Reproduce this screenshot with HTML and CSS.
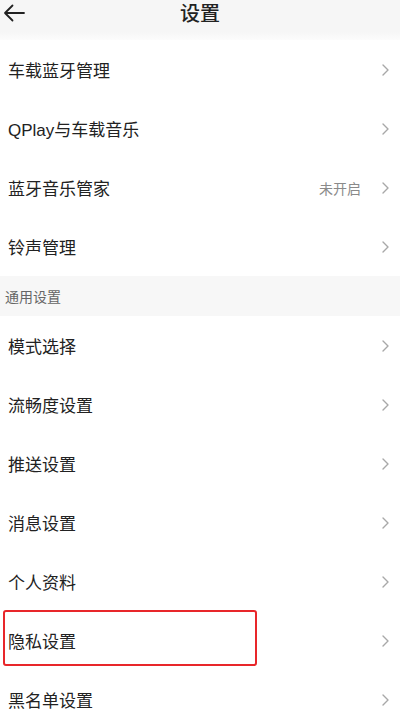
FILE: index.html
```html
<!DOCTYPE html>
<html>
<head>
    <meta charset="UTF-8">
    <meta name="viewport" content="width=device-width, initial-scale=1.0">
    <title>设置</title>
    <link rel="stylesheet" href="styles.css">
</head>
<body>
    <div class="page">
        <div class="top-bar">
            <span class="back-btn">
                <svg width="22" height="18" viewBox="0 0 22 18">
                    <path d="M21 9H2M9.5 1.5L2 9l7.5 7.5" fill="none" stroke="#222" stroke-width="1.8" stroke-linecap="round" stroke-linejoin="round"/>
                </svg>
            </span>
            <h1 class="page-title">设置</h1>
        </div>

        <ul class="setting-list">
            <li class="setting-item"><span class="item-name">车载蓝牙管理</span><svg class="arrow" viewBox="0 0 7 12"><path d="M1 1l5 5-5 5"/></svg></li>
            <li class="setting-item"><span class="item-name">QPlay与车载音乐</span><svg class="arrow" viewBox="0 0 7 12"><path d="M1 1l5 5-5 5"/></svg></li>
            <li class="setting-item"><span class="item-name">蓝牙音乐管家</span><span class="item-value">未开启</span><svg class="arrow" viewBox="0 0 7 12"><path d="M1 1l5 5-5 5"/></svg></li>
            <li class="setting-item"><span class="item-name">铃声管理</span><svg class="arrow" viewBox="0 0 7 12"><path d="M1 1l5 5-5 5"/></svg></li>
        </ul>

        <div class="section-title">通用设置</div>

        <ul class="setting-list">
            <li class="setting-item"><span class="item-name">模式选择</span><svg class="arrow" viewBox="0 0 7 12"><path d="M1 1l5 5-5 5"/></svg></li>
            <li class="setting-item"><span class="item-name">流畅度设置</span><svg class="arrow" viewBox="0 0 7 12"><path d="M1 1l5 5-5 5"/></svg></li>
            <li class="setting-item"><span class="item-name">推送设置</span><svg class="arrow" viewBox="0 0 7 12"><path d="M1 1l5 5-5 5"/></svg></li>
            <li class="setting-item"><span class="item-name">消息设置</span><svg class="arrow" viewBox="0 0 7 12"><path d="M1 1l5 5-5 5"/></svg></li>
            <li class="setting-item"><span class="item-name">个人资料</span><svg class="arrow" viewBox="0 0 7 12"><path d="M1 1l5 5-5 5"/></svg></li>
            <li class="setting-item highlighted"><span class="item-name">隐私设置</span><svg class="arrow" viewBox="0 0 7 12"><path d="M1 1l5 5-5 5"/></svg></li>
            <li class="setting-item"><span class="item-name">黑名单设置</span><svg class="arrow" viewBox="0 0 7 12"><path d="M1 1l5 5-5 5"/></svg></li>
        </ul>
    </div>
</body>
</html>
```

FILE: styles.css
```css
body {
    margin: 0;
    padding: 0;
    background-color: #fff;
    font-family: "Liberation Sans", "Noto Sans CJK SC", sans-serif;
    color: #222;
    overflow: hidden;
}
.page {
    width: 400px;
    height: 710px;
    overflow: hidden;
}
.top-bar {
    height: 40px;
    background: linear-gradient(#f6f6f6 0, #f6f6f6 32px, #fcfcfc 40px);
    display: flex;
    align-items: flex-start;
    justify-content: center;
    position: relative;
}
.back-btn {
    position: absolute;
    left: 3px;
    top: 4px;
    line-height: 0;
}
.page-title {
    margin: 0;
    padding-top: 1px;
    font-size: 20px;
    font-weight: 500;
    line-height: 26px;
    color: #222;
}
.setting-list {
    list-style: none;
    margin: 0;
    padding: 0;
}
.setting-item {
    height: 59px;
    display: flex;
    align-items: center;
    padding: 0 11px 0 8px;
    box-sizing: border-box;
    position: relative;
}
.item-name {
    flex: 1;
    font-size: 17px;
    color: #222;
}
.item-value {
    font-size: 14px;
    color: #8a8a8a;
    margin-right: 21px;
}
.arrow {
    width: 7px;
    height: 12px;
    fill: none;
    stroke: #a8a8a8;
    stroke-width: 1.4;
    stroke-linecap: round;
    stroke-linejoin: round;
}
.section-title {
    height: 40px;
    background-color: #f7f7f7;
    font-size: 14px;
    color: #666;
    padding-left: 5px;
    display: flex;
    align-items: center;
}
.highlighted::after {
    content: "";
    position: absolute;
    left: 3px;
    top: -1px;
    width: 250px;
    height: 52px;
    border: 2px solid #e8262a;
    border-radius: 3px;
}
```
